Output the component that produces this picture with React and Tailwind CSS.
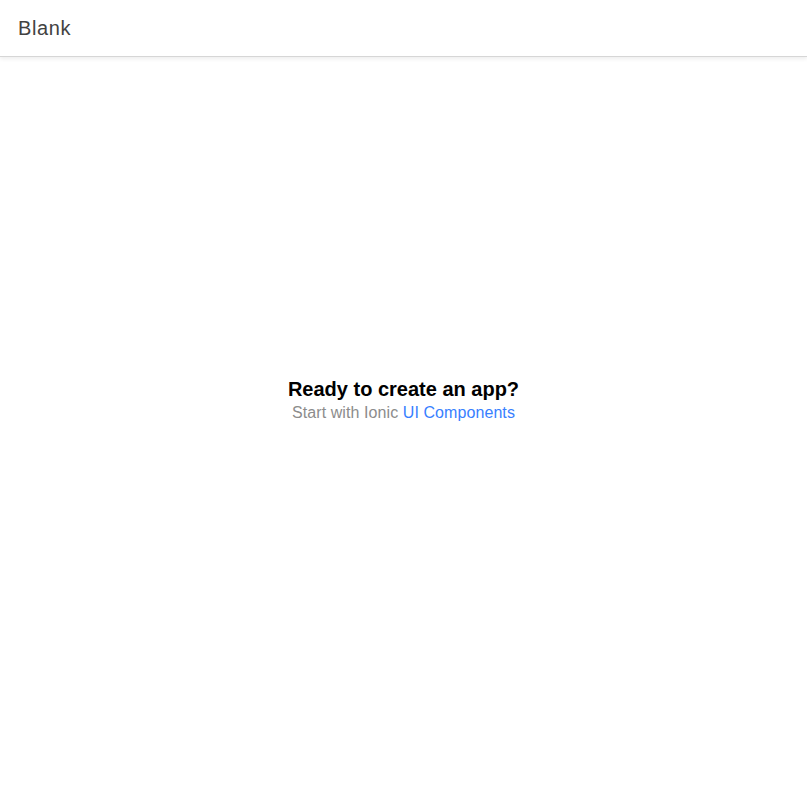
export default function App() {
  return (
    <div className="min-h-screen flex flex-col bg-white font-['Liberation_Sans',Arial,sans-serif]">
      {/* Toolbar */}
      <header className="h-[57px] shrink-0 flex items-center px-[18px] bg-white border-b border-[#d6d6d6] shadow-[0_2px_4px_rgba(0,0,0,0.07)] relative z-10">
        <h1 className="text-[20px] font-medium text-[#424242] tracking-[0.03em]">Blank</h1>
      </header>

      {/* Content */}
      <main className="flex-1 flex items-center justify-center pb-[49px]">
        <div className="text-center">
          <strong className="block text-[20px] leading-[26px] font-bold text-black">Ready to create an app?</strong>
          <p className="text-[16px] leading-[22px] text-[#8c8c8c] tracking-[0.005em]">
            Start with Ionic{' '}
            <a href="#" className="text-[#3880ff]">UI Components</a>
          </p>
        </div>
      </main>
    </div>
  )
}
